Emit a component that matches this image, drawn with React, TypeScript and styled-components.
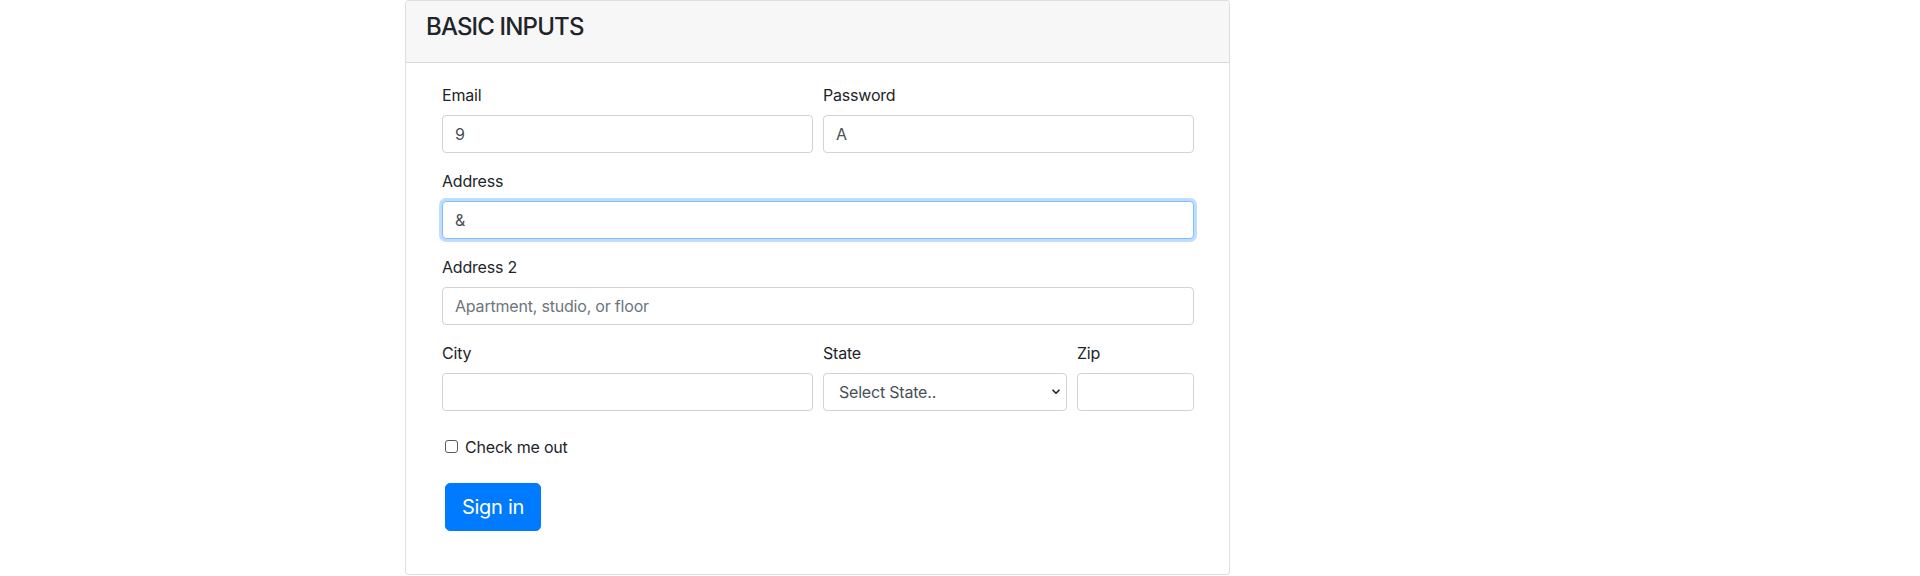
import React from "react";
import styled, { createGlobalStyle } from "styled-components";

const Global = createGlobalStyle`
  html, body { margin: 0; padding: 0; background: #fff; }
  body {
    font-family: Inter, "Liberation Sans", Arial, sans-serif;
    font-size: 16px;
    line-height: 1.5;
    color: #212529;
  }
  * { box-sizing: border-box; }
`;

const Container = styled.div`
  max-width: 1140px;
  margin: 0 auto;
  padding: 0 15px;
`;

const Row = styled.div`
  display: flex;
  margin: 0 -15px;
`;

const Col = styled.div`
  flex: 0 0 75%;
  max-width: 75%;
  padding: 0 15px;
`;

const Card = styled.div`
  border: 1px solid rgba(0, 0, 0, 0.125);
  border-radius: 4px;
  background: #fff;
  overflow: hidden;
`;

const CardHeader = styled.div`
  padding: 12px 20px;
  background: #f7f7f7;
  border-bottom: 1px solid rgba(0, 0, 0, 0.125);
`;

const Title = styled.h4`
  margin: 0 0 8px;
  font-size: 24px;
  font-weight: 500;
  line-height: 1.2;
  letter-spacing: -0.85px;
`;

const CardBody = styled.div`
  padding: 20px;
`;

const Form = styled.form`
  padding: 0 15px 23px 16px;
`;

const Grid = styled.div`
  display: grid;
  grid-template-columns: repeat(12, 1fr);
  column-gap: 10px;
`;

const Group = styled.div<{ $span: number }>`
  grid-column: span ${(p) => p.$span};
  margin-bottom: 16px;
  min-width: 0;
`;

const Label = styled.label`
  display: block;
  margin-bottom: 8px;
  font-size: 16px;
  line-height: 24px;
  letter-spacing: -0.2px;
`;

const Input = styled.input<{ $focused?: boolean }>`
  display: block;
  width: 100%;
  height: 38px;
  padding: 6px 12px;
  font-family: inherit;
  font-size: 16px;
  line-height: 24px;
  color: #495057;
  background: #fff;
  border: 1px solid ${(p) => (p.$focused ? "#80bdff" : "#ced4da")};
  border-radius: 4px;
  outline: none;
  box-shadow: ${(p) => (p.$focused ? "0 0 0 3px rgba(0, 123, 255, 0.25)" : "none")};
  letter-spacing: -0.2px;
  &::placeholder { color: #6c757d; opacity: 1; }
`;

const SelectWrap = styled.div`
  position: relative;
`;

const Select = styled.select`
  display: block;
  width: 100%;
  height: 38px;
  padding: 6px 30px 6px 15px;
  font-family: inherit;
  font-size: 16px;
  color: #495057;
  background: #fff;
  border: 1px solid #ced4da;
  border-radius: 4px;
  appearance: none;
  -webkit-appearance: none;
  outline: none;
  letter-spacing: -0.2px;
`;

const Chevron = styled.svg`
  position: absolute;
  right: 7px;
  top: 16px;
  width: 8px;
  height: 6px;
  pointer-events: none;
`;

const CheckRow = styled.div`
  display: flex;
  align-items: center;
  height: 24px;
  padding-left: 3px;
  margin: 8px 0 24px;
`;

const Checkbox = styled.input`
  appearance: none;
  -webkit-appearance: none;
  width: 13px;
  height: 13px;
  margin: 0 7px 0 0;
  border: 1px solid #5a5a5a;
  border-radius: 3px;
  background: #fff;
`;

const CheckLabel = styled.label`
  font-size: 16px;
  line-height: 24px;
  letter-spacing: -0.2px;
`;

const Button = styled.button`
  display: block;
  margin-left: 3px;
  height: 48px;
  padding: 8px 16px;
  font-family: inherit;
  font-size: 20px;
  line-height: 30px;
  color: #fff;
  background: #007bff;
  border: 1px solid #007bff;
  border-radius: 5px;
  letter-spacing: -0.3px;
`;

export default function App() {
  return (
    <>
      <Global />
      <Container>
        <Row>
          <Col>
            <Card>
              <CardHeader>
                <Title>BASIC INPUTS</Title>
              </CardHeader>
              <CardBody>
                <Form onSubmit={(e) => e.preventDefault()}>
                  <Grid>
                    <Group $span={6}>
                      <Label>Email</Label>
                      <Input type="text" defaultValue="9" />
                    </Group>
                    <Group $span={6}>
                      <Label>Password</Label>
                      <Input type="text" defaultValue="A" />
                    </Group>
                    <Group $span={12}>
                      <Label>Address</Label>
                      <Input type="text" defaultValue="&" $focused />
                    </Group>
                    <Group $span={12}>
                      <Label>Address 2</Label>
                      <Input type="text" placeholder="Apartment, studio, or floor" />
                    </Group>
                    <Group $span={6}>
                      <Label>City</Label>
                      <Input type="text" />
                    </Group>
                    <Group $span={4}>
                      <Label>State</Label>
                      <SelectWrap>
                        <Select defaultValue="">
                          <option value="">Select State..</option>
                        </Select>
                        <Chevron viewBox="0 0 8 6">
                          <path d="M1 1.2 L4 4.2 L7 1.2" fill="none" stroke="#222" strokeWidth="1.6" strokeLinecap="round" strokeLinejoin="round" />
                        </Chevron>
                      </SelectWrap>
                    </Group>
                    <Group $span={2}>
                      <Label>Zip</Label>
                      <Input type="text" />
                    </Group>
                  </Grid>
                  <CheckRow>
                    <Checkbox type="checkbox" id="chk" />
                    <CheckLabel htmlFor="chk">Check me out</CheckLabel>
                  </CheckRow>
                  <Button type="submit">Sign in</Button>
                </Form>
              </CardBody>
            </Card>
          </Col>
        </Row>
      </Container>
    </>
  );
}
